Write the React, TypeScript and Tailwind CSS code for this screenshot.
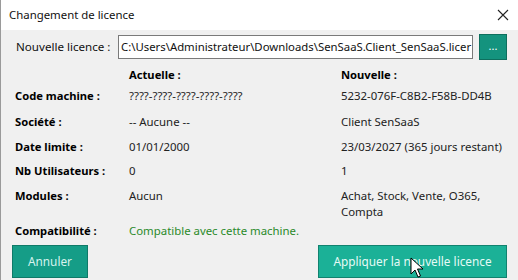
import React from "react";

const font = { fontFamily: '"Noto Sans", "Open Sans", sans-serif' };

function Row({ h, label, a, b, aClass = "" }: { h: string; label: string; a: React.ReactNode; b: React.ReactNode; aClass?: string }) {
  return (
    <div className={`flex items-start ${h}`}>
      <div className="w-[114px] shrink-0 font-bold text-[11.2px] leading-[16px] text-black">{label}</div>
      <div className={`w-[212px] shrink-0 text-[11.4px] leading-[16px] ${aClass || "text-[#222]"}`}>{a}</div>
      <div className="flex-1 text-[11.4px] leading-[16px] text-[#222]">{b}</div>
    </div>
  );
}

export default function App() {
  return (
    <div className="w-[518px] h-[280px] bg-[#f0f0f0] overflow-hidden border-l border-[#9a9a9a] relative" style={font}>
      <div className="h-[30px] bg-white flex items-center justify-between pl-[8px] pr-[8px]">
        <span className="text-[11.4px] text-[#111]">Changement de licence</span>
        <svg width="12" height="12" viewBox="0 0 12 12" className="mr-[1px]">
          <path d="M1 1 L11 11 M11 1 L1 11" stroke="#222" strokeWidth="1.1" />
        </svg>
      </div>
      <div className="flex items-center h-[30px] mt-[2px] pl-[15px]">
        <span className="w-[102px] text-[11.6px] text-[#111]">Nouvelle licence :</span>
        <div className="w-[355px] h-[24px] bg-white border border-[#7a7a7a] flex items-center pl-[2px] overflow-hidden whitespace-nowrap text-[11.35px] text-[#111]">
          C:\Users\Administrateur\Downloads\SenSaaS.Client_SenSaaS.licer
        </div>
        <div className="ml-[6px] w-[28px] h-[26px] bg-[#14937e] border border-[#0e6f5e] flex items-center justify-center text-white text-[11px] leading-none pb-[3px]">...</div>
      </div>
      <div className="pl-[14px] pt-[5px] flex flex-col">
        <div className="flex items-start h-[21px]">
          <div className="w-[114px] shrink-0" />
          <div className="w-[212px] shrink-0 font-bold text-[11.2px] leading-[16px] text-black">Actuelle :</div>
          <div className="flex-1 font-bold text-[11.2px] leading-[16px] text-black">Nouvelle :</div>
        </div>
        <Row h="h-[26px]" label="Code machine :" a="????-????-????-????-????" b="5232-076F-C8B2-F58B-DD4B" />
        <Row h="h-[25px]" label="Société :" a="-- Aucune --" b="Client SenSaaS" />
        <Row h="h-[24px]" label="Date limite :" a="01/01/2000" b="23/03/2027 (365 jours restant)" />
        <Row h="h-[25px]" label="Nb Utilisateurs :" a="0" b="1" />
        <Row h="h-[35px]" label="Modules :" a="Aucun" b={<>Achat, Stock, Vente, O365,<br />Compta</>} />
        <Row h="h-[16px]" label="Compatibilité :" a={<span className="whitespace-nowrap">Compatible avec cette machine.</span>} b="" aClass="text-[#2a8a2a]" />
      </div>
      <div className="flex justify-between items-start pl-[11px] pr-[11px] mt-[6px]">
        <div className="w-[76px] h-[33px] bg-[#159d87] border border-[#0f7a68] flex items-center justify-center text-[11.8px] text-[#d8f3ee]">Annuler</div>
        <div className="w-[189px] h-[33px] bg-[#1bb197] border border-[#11826f] flex items-center justify-center text-[11.8px] text-[#e6faf6]">Appliquer la nouvelle licence</div>
      </div>
      <svg className="absolute left-[409px] top-[257px]" width="16" height="23" viewBox="0 0 16 23">
        <path d="M1 1 L1 17 L5 13 L8 20 L10.5 19 L7.5 12 L13 12 Z" fill="#fff" stroke="#000" strokeWidth="1" />
      </svg>
    </div>
  );
}
